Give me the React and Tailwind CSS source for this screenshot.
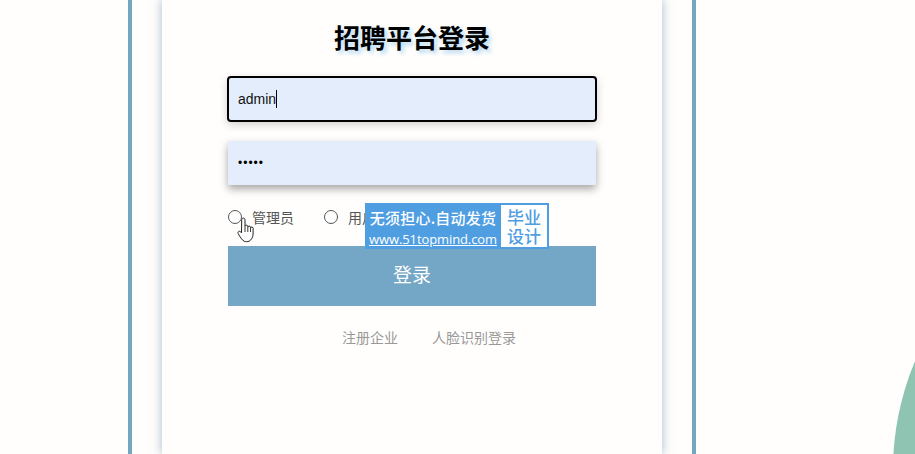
import React from "react";

const cjk = "font-['Noto_Sans_CJK_SC','Liberation_Sans',sans-serif]";

const Radio = ({ label, className }) => (
  <label className={`flex items-center ${className}`}>
    <input type="radio" className="appearance-none w-[14px] h-[14px] rounded-full border border-[#555] bg-white" />
    <span className="ml-[10px] text-[14px] leading-none text-[#555]">{label}</span>
  </label>
);

const HandCursor = () => (
  <svg className="absolute left-[237px] top-[217px]" width="19" height="27" viewBox="0 0 18 27">
    <path
      d="M4.2 2.8c0-2.2 3.3-2.2 3.3 0v6.6c0-1.7 2.8-1.7 2.8 0v.9c0-1.6 2.7-1.6 2.7 0v.9c0-1.5 2.6-1.5 2.6 0v5.8c0 2-.6 3.4-1.4 4.6-.7 1.2-1.4 2-2.6 2.6-1.4.6-3.6.6-5 0-1.4-.7-2-1.7-3-3-1-1.3-2.3-3.2-3-4.8-.7-1.8 1.4-2.9 2.5-1.6l.9 1z"
      fill="#fff"
      stroke="#222"
      strokeWidth="1"
      strokeLinejoin="round"
    />
    <path d="M7.5 9.5v5.5M10.3 10.3V15M13 11.2V15" stroke="#222" strokeWidth="0.9" fill="none" />
  </svg>
);

const Banner = () => (
  <div className="absolute left-[365px] top-[203px] w-[184px] h-[46px] flex bg-[#4f9ee2] border-2 border-l-0 border-[#4f9ee2] text-white">
    <div className="w-[136px] shrink-0 flex flex-col items-center">
      <div className="text-[15px] leading-[20px] mt-[3px] font-medium whitespace-nowrap tracking-[0.2px]">无须担心.自动发货</div>
      <div className="text-[13px] leading-[17px] mt-[3px] font-medium underline whitespace-nowrap font-['Open_Sans',sans-serif] tracking-[-0.1px]">www.51topmind.com</div>
    </div>
    <div className="flex-1 bg-white text-[#4f9ee2] text-[17px] font-medium leading-[19px] text-center pt-[2px]">
      <div>毕业</div>
      <div>设计</div>
    </div>
  </div>
);

const App = () => {
  return (
    <div className={`relative w-[915px] h-[454px] overflow-hidden bg-[#fffefc] ${cjk}`}>
      <div className="absolute left-[893px] top-[190px] w-[560px] h-[560px] rounded-full bg-[#8fc4b3]" />

      <div className="relative ml-[128px] w-[568px] h-[454px] border-x-4 border-[#74a8bf] px-[30px]">
        <div className="w-[500px] h-[454px] bg-[#fffefc] shadow-[0_0_10px_rgba(80,130,170,0.55)] flex flex-col items-center">
          <h1 className="mt-[18px] h-[38px] text-[26px] leading-[38px] font-bold text-black [text-shadow:3px_3px_4px_#b5d8f0]">
            招聘平台登录
          </h1>

          <div className="mt-[20px] w-[370px] h-[46px] flex items-center pl-[9px] bg-[#e4edfb] border-2 border-black rounded-[4px] font-['Liberation_Sans',sans-serif] text-[14px] text-[#111] shadow-[0_3px_8px_rgba(0,0,0,0.18)]">
            admin
            <span className="w-px h-[18px] bg-black" />
          </div>

          <div className="mt-[19px] w-[368px] h-[44px] flex items-center pl-[10px] bg-[#e4edfb] font-['Liberation_Sans',sans-serif] text-[12px] tracking-[1px] text-black shadow-[0_4px_8px_rgba(0,0,0,0.35)]">
            •••••
          </div>

          <div className="mt-[25px] w-[368px] h-[14px] flex items-center">
            <Radio label="管理员" />
            <Radio label="用户" className="ml-[30px]" />
          </div>

          <button className="mt-[22px] w-[368px] h-[60px] pb-[3px] bg-[#74a6c5] text-white text-[19px]">登录</button>

          <div className="mt-[21px] ml-[34px] flex gap-[34px] text-[14px] leading-[20px] text-[#999]">
            <span>注册企业</span>
            <span>人脸识别登录</span>
          </div>
        </div>
      </div>

      <Banner />
      <HandCursor />
    </div>
  );
};

export default App;
